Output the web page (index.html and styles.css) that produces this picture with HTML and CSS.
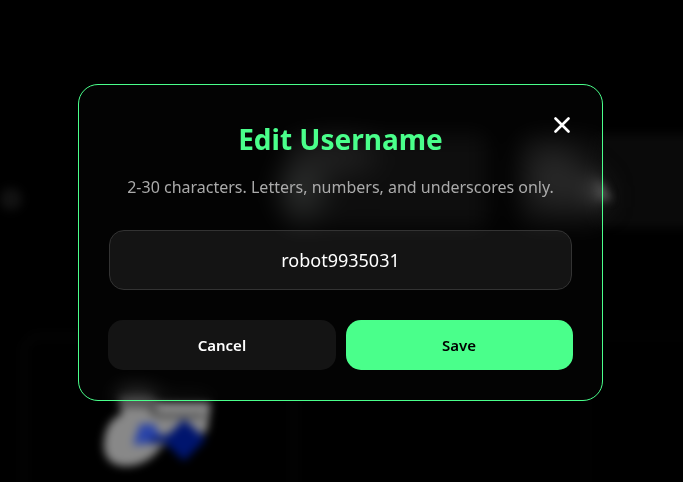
FILE: index.html
```
<!DOCTYPE html>
<html lang="en">
<head>
  <meta charset="UTF-8">
  <meta name="viewport" content="width=device-width, initial-scale=1.0">
  <title>Edit Username</title>
  <link rel="stylesheet" href="styles.css">
</head>
<body>
  <svg class="backdrop" viewBox="0 0 683 482" preserveAspectRatio="xMidYMid slice" aria-hidden="true">
    <g class="soft">
      <rect x="285" y="134" width="202" height="94" rx="8" fill="#0c0c0c"/>
      <rect x="519" y="134" width="190" height="94" rx="8" fill="#0a0a0a"/>
      <circle cx="11" cy="199" r="11" fill="#121212"/>
      <rect x="24" y="336" width="270" height="190" rx="16" fill="none" stroke="#050505" stroke-width="5"/>
      <rect x="586" y="336" width="130" height="190" rx="16" fill="none" stroke="#030303" stroke-width="5"/>
    </g>
    <g class="wide">
      <ellipse cx="302" cy="190" rx="20" ry="26" fill="#2c2e2d"/>
      <ellipse cx="338" cy="157" rx="40" ry="14" fill="#222"/>
      <path d="M528 150l34-4 44 40v22h-78z" fill="#262626"/>
    </g>
    <path class="spot" d="M590 178l13 6 9 16h-22z" fill="#555"/>
    <g class="crest">
      <path d="M119 394h32l8 8h52l-4 29-20 12-25 2c-8 14-22 21-36 21-15 0-23-9-22-23 1-16 8-25 18-29z" fill="#888"/>
      <path d="M119 392h32l6 12v9l-12-5h-26z" fill="#555"/>
      <path d="M150 412l10 4h44" fill="none" stroke="#444" stroke-width="4"/>
      <path d="M140 424h14l10 18-31 3z" fill="#2a44a8"/>
      <path d="M184 419l22 20-22 22-20-19-14 2 1-6 18-4z" fill="#00156e"/>
    </g>
  </svg>

  <form class="modal" role="dialog" aria-labelledby="modal-title" onsubmit="return false">
    <button type="button" class="close" aria-label="Close">
      <svg width="16" height="16" viewBox="0 0 16 16">
        <path d="M1.5 1.5l13 13M14.5 1.5l-13 13" stroke="#fff" stroke-width="2.6" stroke-linecap="round"/>
      </svg>
    </button>
    <h2 id="modal-title">Edit Username</h2>
    <label for="username">2-30 characters. Letters, numbers, and underscores only.</label>
    <div class="field">
      <input type="text" id="username" value="robot9935031" maxlength="30">
    </div>
    <div class="actions">
      <button type="button" class="cancel">Cancel</button>
      <button type="submit" class="save">Save</button>
    </div>
  </form>
</body>
</html>
```
FILE: styles.css
```
* {
  box-sizing: border-box;
}
body {
  margin: 0;
  padding: 2px 2px 0 0;
  min-height: 100vh;
  display: flex;
  align-items: center;
  justify-content: center;
  background: #000;
  color: #fff;
  font-family: "Segoe UI", "Noto Sans", sans-serif;
}
.backdrop {
  position: fixed;
  inset: 0;
  width: 100%;
  height: 100%;
}
.soft {
  filter: blur(5px);
}
.wide {
  filter: blur(12px);
}
.spot {
  filter: blur(4px);
}
.crest {
  filter: blur(4px);
}
.modal {
  position: relative;
  width: 77%;
  max-width: 560px;
  padding: 29px 29px 30px;
  border: 1px solid #4aff8b;
  border-radius: 20px;
  background: rgba(255, 255, 255, 0.01);
  backdrop-filter: blur(10px);
  text-align: center;
}
.close {
  position: absolute;
  top: 24px;
  right: 24px;
  width: 32px;
  height: 32px;
  padding: 8px;
  border: none;
  background: none;
  cursor: pointer;
}
.close svg {
  display: block;
}
h2 {
  margin: 5px 0 13px;
  color: #4aff8b;
  font-size: 28px;
  line-height: 40px;
}
label {
  display: block;
  margin-bottom: 28px;
  color: #aaa;
  font-size: 16px;
  line-height: 30px;
}
.field {
  margin-bottom: 30px;
  padding: 0 1px;
}
input {
  display: block;
  width: 100%;
  height: 60px;
  padding: 0 20px;
  border: 1px solid #333;
  border-radius: 15px;
  background: rgba(255, 255, 255, 0.07);
  color: #fff;
  font-family: inherit;
  font-size: 18px;
  text-align: center;
  outline: none;
}
.actions {
  display: flex;
  gap: 10px;
}
.actions button {
  flex: 1;
  height: 50px;
  border: none;
  border-radius: 15px;
  font-family: inherit;
  font-size: 15px;
  font-weight: 600;
  cursor: pointer;
}
.cancel {
  background: rgba(255, 255, 255, 0.07);
  color: #fff;
}
.save {
  background: #4aff8b;
  color: #000;
}
```
